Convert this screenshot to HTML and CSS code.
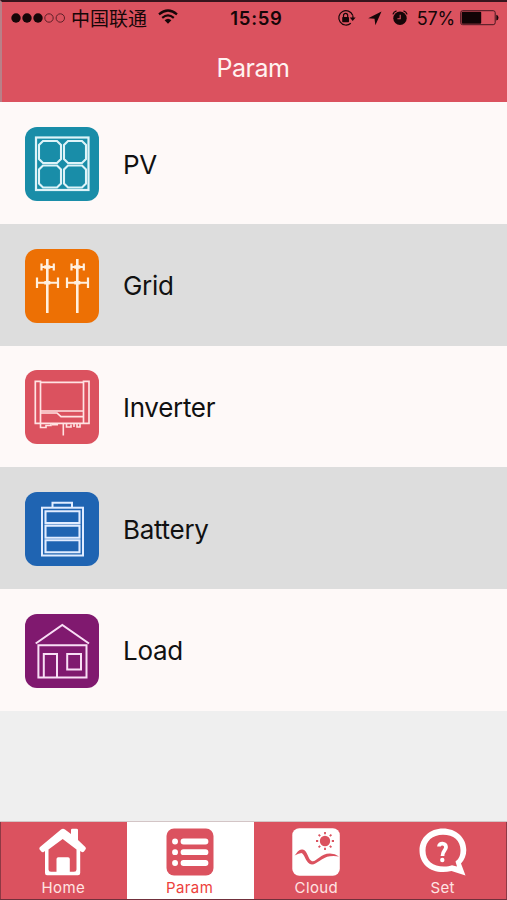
FILE: index.html
```html
<!DOCTYPE html>
<html lang="en">
<head>
<meta charset="utf-8">
<title>Param</title>
<link rel="stylesheet" href="styles.css">
</head>
<body>
<div class="app">
  <header class="header">
    <div class="status">
      <div class="status-left">
        <svg class="signal" width="54" height="12" viewBox="0 0 54 12"><g fill="#160608"><circle cx="5" cy="6" r="4.7"/><circle cx="16" cy="6" r="4.7"/><circle cx="27" cy="6" r="4.7"/></g><g fill="none" stroke="#5e2028" stroke-width="1"><circle cx="38" cy="6" r="4.2"/><circle cx="49.3" cy="6" r="4.2"/></g></svg>
        <span class="carrier">中国联通</span>
        <svg class="wifi" width="20" height="16" viewBox="0 0 20 16"><g fill="none" stroke="#160608" stroke-width="2.2"><path d="M1 5.4Q10-2.4 19 5.4"/><path d="M4.2 8.9Q10 3.9 15.8 8.9"/></g><path d="M6.6 11.2Q10 8.2 13.4 11.2L10 14.8Z" fill="#160608"/></svg>
      </div>
      <span class="clock">15:59</span>
      <div class="status-right">
        <svg width="19" height="18" viewBox="0 0 19 18"><path d="M15.7 6.2A7.2 7.2 0 1 0 13.8 14.2M15.9 6.5V10" fill="none" stroke="#160608" stroke-width="1.2"/><path d="M12.8 8.5H18.6L15.7 12Z" fill="#160608"/><rect x="5.2" y="8" width="6.8" height="5.2" rx=".7" fill="#160608"/><path d="M6.5 8.3V6.5A2.1 2.1 0 0 1 10.7 6.5V8.3" fill="none" stroke="#160608" stroke-width="1.2"/></svg>
        <svg class="arrow" width="14" height="15" viewBox="0 0 14 15"><path d="M13.5.5L.2 7.2L6.5 7.8L7.4 14.3Z" fill="#160608"/></svg>
        <svg class="alarm" width="16" height="16" viewBox="0 0 16 16"><circle cx="8" cy="8.3" r="6.7" fill="#160608"/><path d="M.9 4.4Q1.7 1.7 4.5.9M11.5.9Q14.3 1.7 15.1 4.4" fill="none" stroke="#160608" stroke-width="1.3"/><path d="M8.2 4.8V8.7H5.4" fill="none" stroke="#db525f" stroke-width="1.1"/></svg>
        <span class="percent">57%</span>
        <svg class="battery" width="39" height="16" viewBox="0 0 39 16"><rect x=".7" y=".7" width="34.5" height="14" rx="2" fill="none" stroke="#451820"/><rect x="1.7" y="1.7" width="19.5" height="12" rx="1" fill="#110406"/><path d="M36.3 4.8Q38.5 5.4 38.5 7.7T36.3 10.6Z" fill="#160608"/></svg>
      </div>
    </div>
    <h1 class="title">Param</h1>
  </header>
  <main class="list">
    <div class="row">
      <svg class="tile pv" viewBox="0 0 74 74"><rect x="11" y="10.5" width="52.5" height="52.5" stroke-width="2.2"/><path d="M18 14H32L36 18V32L32 36H18L14 32V18ZM43 14H57L61 18V32L57 36H43L39 32V18ZM18 38.5H32L36 42.5V56.5L32 60.5H18L14 56.5V42.5ZM43 38.5H57L61 42.5V56.5L57 60.5H43L39 56.5V42.5Z" stroke-width="2.1"/></svg>
      <span class="label">PV</span>
    </div>
    <div class="row alt">
      <svg class="tile grid" viewBox="0 0 74 74"><path d="M22.3 10V64M52.3 10V64" stroke-width="2.6"/><path d="M16 18H29M11 33.7H34M46 18H59M41 33.7H64" stroke-width="2"/><path d="M16.5 14.5V21.5M28.8 14.5V21.5M12 28.5V39M33 28.5V39M46.5 14.5V21.5M58.8 14.5V21.5M42 28.5V39M63 28.5V39" stroke-width="2.2"/><path d="M19.3 18H25.3M19.3 33.7H25.3M49.3 18H55.3M49.3 33.7H55.3" stroke-width="3.5"/></svg>
      <span class="label">Grid</span>
    </div>
    <div class="row">
      <svg class="tile inverter" viewBox="0 0 74 74"><path d="M10.3 11.3H15.5V53.3H10.3ZM58.5 11.3H64V53.3H58.5ZM15.5 12.3H58.5M15.5 41H58.5M15.5 43H32L36 46.7H58.5M15.5 53.3H58.5" stroke-width="1.7"/><path d="M15.5 54V57.5H21V55.5H26V54M38.3 54V65.5M27 54.8H33M41.5 54V57H46V54.5M49 54V57M52 54V57H55V54" stroke-width="1.6"/></svg>
      <span class="label">Inverter</span>
    </div>
    <div class="row alt">
      <svg class="tile cell" viewBox="0 0 74 74"><path d="M27.5 15.5V10.7H47V15.5" stroke-width="2"/><rect x="17" y="15.7" width="41" height="47.8" stroke-width="2"/><path d="M20.5 19.3H54.5V31H20.5ZM20.5 33.6H54.5V45.7H20.5ZM20.5 48.2H54.5V60.2H20.5Z" stroke-width="2.1"/></svg>
      <span class="label">Battery</span>
    </div>
    <div class="row">
      <svg class="tile load" viewBox="0 0 74 74"><path d="M10.7 29.5L37.3 11L64 29.5" stroke-width="2"/><path d="M13.4 31.3H61.5V63.5H13.4Z" stroke-width="2"/><path d="M18.8 63V40H32V63M42.2 40H56V55.5H42.2Z" stroke-width="2"/></svg>
      <span class="label">Load</span>
    </div>
  </main>
  <nav class="tabs">
    <div class="tab">
      <svg class="tab-icon" viewBox="0 0 48 48"><path fill="#fff" fill-rule="evenodd" d="M22 1.5Q24 .2 26 1.5L32 6V2Q32 .7 33.3.7H37.5Q39 .7 39 2V12L46.3 19Q47.5 20.3 46.3 21.8L45 23.5Q43.7 24.8 42 23.5L41.2 23V45Q41.2 47.3 39 47.3H8Q6 47.3 6 45V23L5 23.7Q3.5 24.8 2.3 23.5L.8 21.8Q-.2 20.3 1 19ZM23.7 11L9.5 21.5V41.5Q9.5 43.8 12 43.8H17.5V31Q17.5 29.2 19.3 29.2H29Q30.8 29.2 30.8 31V43.8H35Q37.5 43.8 37.5 41.5V21.5Z"/></svg>
      <span>Home</span>
    </div>
    <div class="tab active">
      <svg class="tab-icon" viewBox="0 0 48 48"><rect x=".5" y=".5" width="47" height="47" rx="7.5" fill="#db525f"/><g stroke="#fff" stroke-linecap="round" stroke-width="5.8"><path d="M17.5 13.5H39.5M17.5 24.2H39.5M17.5 35H39.5M9 13.5H9.1M9 24.2H9.1M9 35H9.1"/></g></svg>
      <span>Param</span>
    </div>
    <div class="tab">
      <svg class="tab-icon" viewBox="0 0 48 48"><rect x=".3" y=".3" width="47.5" height="47.5" rx="7" fill="#fff"/><g fill="#db525f"><circle cx="33" cy="13" r="5.2"/><path d="M2.5 27.5C5 25.5 6 21 10.5 21.5C15.5 22 16 32 20 33.2C24.5 34.2 28 25.5 38 25.5Q43 25.5 47 28.5Q42 27.7 38 28.3C30 29.2 25 36.5 20 36.5C14 36.5 12.5 25.5 9.5 25Q7 25 2.5 27.5Z"/></g><path d="M33 4V6.2M33 19.8V22M24 13H26.2M39.8 13H42M26.6 6.6L28.2 8.2M37.8 17.8L39.4 19.4M26.6 19.4L28.2 17.8M37.8 8.2L39.4 6.6" stroke="#db525f" stroke-width="1.8"/></svg>
      <span>Cloud</span>
    </div>
    <div class="tab">
      <svg class="tab-icon" viewBox="0 0 48 48"><path fill="#fff" fill-rule="evenodd" d="M24 .5C37 .5 47.3 9.5 47.3 22C47.3 27.5 45.3 32 42 35.5L46.5 47.5L32.5 43C15 47.5.5 38 .5 22.5C.5 9.5 11 .5 24 .5ZM24 6.7C13.5 6.7 6.5 13 6.5 22.5C6.5 33 14 38.5 25 38.5C28 38.5 31 38 33 37.2L38 38.5L36.5 33.5C40.5 30.5 41.5 27 41.5 22C41.5 12.5 34.5 6.7 24 6.7Z"/><path d="M20 18.5C20 14.5 27 14.5 27 19C27 22.5 23.5 22.5 23.5 28" fill="none" stroke="#fff" stroke-width="3.8"/><circle cx="23.3" cy="32" r="2.2" fill="#fff"/></svg>
      <span>Set</span>
    </div>
  </nav>
</div>
</body>
</html>
```
FILE: styles.css
```css
* { box-sizing: border-box; }
body { margin: 0; }
.app {
  width: 507px;
  height: 900px;
  display: flex;
  flex-direction: column;
  background: #efefef;
  font-family: Inter, "Noto Sans CJK SC", sans-serif;
  overflow: hidden;
}
svg { display: block; flex: none; }
.header {
  height: 102px;
  flex: none;
  background: #db525f;
  border-top: 2px solid #36141c;
  border-left: 2px solid #b98088;
}
.status {
  height: 32px;
  display: grid;
  grid-template-columns: 1fr auto 1fr;
  align-items: center;
  padding: 0 8px 0 9px;
  color: #160608;
  white-space: nowrap;
}
.status-left, .status-right { display: flex; align-items: center; }
.status-right { justify-content: flex-end; }
.carrier { font: 19px/24px "Noto Sans CJK SC", sans-serif; margin-left: 6px; }
.wifi { margin-left: 11px; margin-top: -2px; }
.clock { font-size: 18.5px; font-weight: 600; letter-spacing: .7px; padding-left: 3px; }
.arrow { margin-left: 12px; }
.alarm { margin-left: 10px; }
.percent { font-size: 18px; margin-left: 9px; letter-spacing: -.2px; }
.battery { margin-left: 5px; }
.title {
  margin: 18px 3px 0 0;
  text-align: center;
  font-size: 25px;
  line-height: 32px;
  font-weight: 400;
  letter-spacing: -.5px;
  color: #fff3f1;
}
.list { display: grid; grid-template-rows: repeat(5, 121.7px); flex: none; padding-top: .4px; background: #fef9f8; }
.row {
  display: flex;
  align-items: center;
  gap: 24px;
  padding: 1.6px 25px 0;
  background: #fef9f8;
}
.alt { background: #ddd; }
.tile { width: 74px; height: 74px; border-radius: 12px; fill: none; }
.pv { background: #198da8; stroke: #def3f8; }
.grid { background: #ed7004; stroke: #fff0df; }
.inverter { background: #db525f; stroke: #ffe3e3; }
.cell { background: #1f64b2; stroke: #e1ecff; }
.load { background: #80196f; stroke: #f8def5; }
.label { font-size: 26px; line-height: 32px; letter-spacing: -.3px; color: #111; padding-top: 1px; }
.tabs {
  margin-top: auto;
  height: 79px;
  flex: none;
  display: grid;
  grid-template-columns: repeat(4, 1fr);
  border-top: 1px solid #d3c5c6;
  border-bottom: 1px solid #70303b;
  background: #db525f;
}
.tab {
  display: flex;
  flex-direction: column;
  align-items: center;
  padding: 6px 1px 0 0;
  color: #ffe4e3;
  font-size: 15px;
  line-height: 20px;
  letter-spacing: .4px;
}
.tab:first-child { border-left: 1px solid #8e3944; }
.tab:last-child { border-right: 1px solid #8e3944; }
.tab-icon { width: 48px; height: 48px; margin-bottom: 2px; }
.active { background: #fff; color: #ed3f3c; }
```
